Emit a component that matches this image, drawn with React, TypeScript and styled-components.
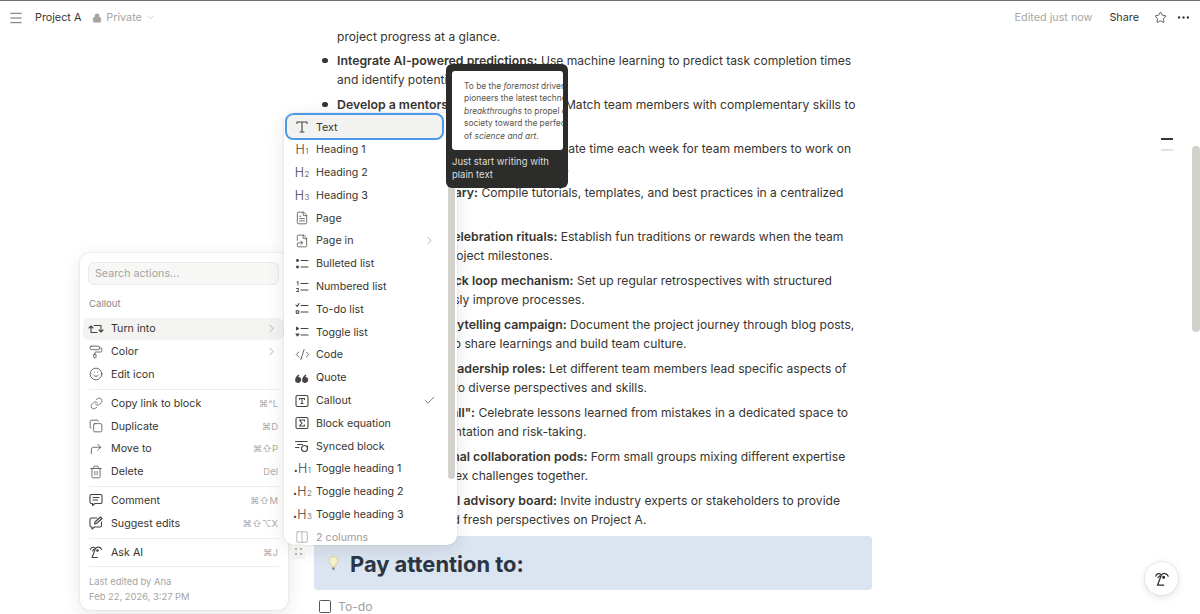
import React from 'react';
import styled, { createGlobalStyle } from 'styled-components';
import {
  Check,
  ChevronDown,
  ChevronRight,
  CodeXml,
  Columns2,
  Copy,
  CornerUpRight,
  FileSymlink,
  FileText,
  Link,
  Lock,
  Menu,
  MoreHorizontal,
  PaintRoller,
  Smile,
  Star,
  Trash2,
} from 'lucide-react';

const GlobalStyle = createGlobalStyle`
  html, body { margin: 0; padding: 0; height: 100%; background: #fff; overflow: hidden; }
  body { font-family: Inter, "Liberation Sans", sans-serif; color: #37352f; }
`;

const Page = styled.div`
  position: relative;
  width: 1200px;
  height: 614px;
  overflow: hidden;
  display: flex;
  flex-direction: column;
  background: #fff;
  border-top: 1px solid #6f6f6f;
  box-sizing: border-box;
`;

const Topbar = styled.header`
  flex: 0 0 30px;
  display: flex;
  align-items: center;
  padding: 3px 9px 0 8px;
  box-sizing: border-box;
  background: #fff;
  position: relative;
  z-index: 1;
  font-size: 10.8px;
`;

const IconBtn = styled.span`
  display: inline-flex;
  color: #37352f;
`;

const Crumb = styled.span`
  margin-left: 11px;
  color: #37352f;
`;

const PrivateTag = styled.span`
  display: flex;
  align-items: center;
  gap: 4px;
  margin-left: 11px;
  color: #a5a4a0;
`;

const Spacer = styled.div`
  flex: 1;
`;

const Edited = styled.span`
  color: #a8a7a3;
  margin-right: 17px;
`;

const ShareLabel = styled.span`
  color: #37352f;
  margin-right: 15px;
`;

const MoreBtn = styled(IconBtn)`
  margin-left: 9px;
`;

const Content = styled.main`
  flex: 1;
  min-height: 0;
  overflow: hidden;
  padding-left: 314px;
`;

const Doc = styled.div`
  width: 558px;
  margin-top: -4px;
`;

const BulletList = styled.ul`
  list-style: none;
  margin: 0;
  padding: 0;
`;

const Bullet = styled.li`
  position: relative;
  padding-left: 23px;
  margin-bottom: 5px;
  font-size: 12.1px;
  line-height: 19.5px;
  color: #37352f;
  &::before {
    content: '';
    position: absolute;
    left: 8px;
    top: 7px;
    width: 5.5px;
    height: 5.5px;
    border-radius: 50%;
    background: #37352f;
  }
  b {
    font-size: 12.3px;
    font-weight: 600;
  }
`;

const FirstLine = styled.div`
  padding-left: 23px;
  margin-bottom: 4px;
  font-size: 12.1px;
  line-height: 19.5px;
`;

const CalloutBox = styled.section`
  display: flex;
  align-items: center;
  gap: 10px;
  height: 54px;
  margin-top: 6px;
  padding: 2px 0 0 13px;
  box-sizing: border-box;
  background: #dbe4f1;
  border-radius: 4px;
`;

const CalloutTitle = styled.h2`
  margin: 0;
  font-size: 21.9px;
  font-weight: 700;
  color: #2b3543;
`;

const TodoRow = styled.div`
  display: flex;
  align-items: center;
  gap: 7px;
  margin-top: 9px;
  padding-left: 5px;
  font-size: 12.2px;
  color: #a3a29e;
`;

const TodoBox = styled.span`
  width: 10px;
  height: 11px;
  border: 1.4px solid #55534e;
  border-radius: 1.5px;
`;

const Outline = styled.div`
  position: absolute;
  top: 137px;
  left: 1161px;
  display: flex;
  flex-direction: column;
  gap: 9px;
`;

const OutlineMark = styled.span<{ $on?: boolean }>`
  width: 12px;
  height: 2px;
  background: ${(p) => (p.$on ? '#37352f' : '#e3e2df')};
`;

const PageScroll = styled.div`
  position: absolute;
  left: 1192px;
  top: 145px;
  width: 8px;
  height: 186px;
  border-radius: 4px;
  background: #d3d1cb;
`;

const Popup = styled.div`
  position: absolute;
  background: #fff;
  border-radius: 10px;
  box-shadow: 0 0 0 1px rgba(55, 53, 47, 0.05), 0 4px 18px rgba(15, 15, 15, 0.1);
  font-size: 10.7px;
  color: #37352f;
`;

const ActionsMenu = styled(Popup)`
  left: 80px;
  top: 252px;
  width: 208px;
  height: 357px;
  padding: 9px 4px 0 3px;
  box-sizing: border-box;
`;

const SearchBox = styled.div`
  height: 23px;
  margin: 0 5px 0 5px;
  padding-left: 6px;
  display: flex;
  align-items: center;
  background: #f7f7f5;
  border: 1px solid #ecebe9;
  border-radius: 6px;
  color: #a5a4a0;
  box-sizing: border-box;
`;

const SectionLabel = styled.div`
  margin: 12px 0 6.5px 6px;
  font-size: 9.6px;
  line-height: 14px;
  color: #8a8985;
`;

const Row = styled.div<{ $hover?: boolean }>`
  display: flex;
  align-items: center;
  height: 22.8px;
  padding: 0 6px 0 5px;
  gap: 7px;
  border-radius: 6px;
  background: ${(p) => (p.$hover ? '#f3f3f1' : 'transparent')};
`;

const RowIcon = styled.span`
  flex: 0 0 16px;
  min-width: 0;
  display: flex;
  justify-content: center;
  align-items: center;
  color: #45443f;
`;

const Shortcut = styled.span`
  margin-left: auto;
  font-size: 9.5px;
  color: #aeada9;
`;

const RowChevron = styled.span`
  margin-left: auto;
  display: flex;
  color: #8d8c88;
`;

const Divider = styled.div`
  height: 1px;
  margin: 3px 5px 2px 6px;
  background: #efeeec;
`;

const Footnote = styled.div`
  margin: 6.5px 0 0 6px;
  font-size: 9.4px;
  line-height: 15.5px;
  color: #a5a4a0;
`;

const BlocksMenu = styled(Popup)`
  left: 284px;
  top: 112px;
  width: 173px;
  height: 432px;
  overflow: hidden;
`;

const BlocksList = styled.div`
  width: 159px;
  padding: 0.4px 0 0 1px;
`;

const BlockRow = styled(Row)<{ $faded?: boolean }>`
  padding: 0 8px 0 9px;
  gap: 6px;
  opacity: ${(p) => (p.$faded ? 0.5 : 1)};
`;

const SelectedRow = styled(BlockRow)`
  height: 27px;
  margin-bottom: -2px;
  background: #f2f2f0;
  border: 2px solid #4d9be8;
  border-radius: 8px;
  padding-left: 7px;
  padding-top: 1px;
  box-sizing: border-box;
`;

const BlockScroll = styled.div`
  position: absolute;
  left: 164px;
  top: 0;
  width: 7px;
  height: 366px;
  border-radius: 4px;
  background: #d3d1cb;
`;

const HeadingGlyph = styled.span`
  font-size: 12.5px;
  font-weight: 300;
  color: #45443f;
  white-space: nowrap;
  small {
    font-size: 8px;
    margin-left: 0.5px;
  }
`;

const Tooltip = styled.div`
  position: absolute;
  left: 446px;
  top: 63px;
  width: 122px;
  height: 124px;
  padding: 7px 5px 0 6px;
  box-sizing: border-box;
  background: #2c2c2b;
  border-radius: 6px;
  color: #dededc;
  font-size: 9.5px;
  line-height: 13px;
`;

const Preview = styled.div`
  height: 79px;
  box-sizing: border-box;
  padding: 9px 0 0 12px;
  margin-bottom: 5px;
  background: #fff;
  border-radius: 3px;
  overflow: hidden;
  color: #56554f;
  font-size: 8.4px;
  line-height: 12.4px;
  white-space: nowrap;
`;

const DragHandle = styled.div`
  position: absolute;
  left: 292px;
  top: 543px;
  width: 13px;
  height: 15px;
  display: grid;
  grid-template-columns: 2px 2px;
  gap: 3px 3px;
  justify-content: center;
  align-content: center;
  background: #f0f0ee;
  border-radius: 2px;
  i {
    width: 2px;
    height: 2px;
    background: #9d9c98;
    border-radius: 50%;
  }
`;

const HelpBtn = styled.div`
  position: absolute;
  left: 1145px;
  top: 561px;
  width: 33px;
  height: 33px;
  display: flex;
  align-items: center;
  justify-content: center;
  border-radius: 50%;
  background: #fff;
  box-shadow: 0 0 0 1px rgba(15, 15, 15, 0.05), 0 2px 8px rgba(15, 15, 15, 0.12);
  color: #2b2a27;
`;

const Svg: React.FC<{ size?: number; children: React.ReactNode }> = ({ size = 16, children }) => (
  <svg width={size} height={size} viewBox="0 0 16 16" fill="none" stroke="currentColor" strokeWidth="1.1" strokeLinecap="round" strokeLinejoin="round">
    {children}
  </svg>
);

const AiFace = ({ size = 16 }: { size?: number }) => (
  <Svg size={size}>
    <path d="M2.5 5.5C3 3 6 2.5 7.5 4.5C9 2.5 12.5 2.5 13.5 5.5M7.5 4.5L4 13.5H9.5M4.5 6.8L6 5.2" />
    <circle cx="9.5" cy="6.5" r="0.8" fill="currentColor" />
  </Svg>
);

const TurnIcon = () => (
  <Svg>
    <path d="M1 7L3 5L5 7M3 5V11.5H9M15 9L13 11L11 9M13 11V4.5H6" />
  </Svg>
);

const CommentIcon = () => (
  <Svg>
    <path d="M3.5 2.5H12.5A1.5 1.5 0 0 1 14 4V10A1.5 1.5 0 0 1 12.5 11.5H7L4.5 13.5V11.5H3.5A1.5 1.5 0 0 1 2 10V4A1.5 1.5 0 0 1 3.5 2.5ZM5 5.5H11M5 8H9.5" />
  </Svg>
);

const SuggestIcon = () => (
  <Svg>
    <path d="M9 3H3.5A1.5 1.5 0 0 0 2 4.5V10.5A1.5 1.5 0 0 0 3.5 12H4V14L6.5 12H12A1.5 1.5 0 0 0 13.5 10.5V7M6.5 9L7 7L12.5 2L14 3.5L8.5 8.5Z" />
  </Svg>
);

const TextIcon = () => (
  <Svg>
    <path d="M3 4.5V3H13V4.5M8 3V13M6 13H10" />
  </Svg>
);

const LinesIcon = ({ kind }: { kind: 'dots' | 'nums' | 'todo' | 'toggle' }) => (
  <Svg>
    <path d="M7 4.5H14M7 11H14" />
    {kind === 'dots' && (
      <>
        <circle cx="3.5" cy="4.5" r="0.9" fill="currentColor" />
        <circle cx="3.5" cy="11" r="0.9" fill="currentColor" />
      </>
    )}
    {kind === 'nums' && <path d="M3 3L4 2.5V6M2.5 9.5H4.5V11L2.5 12.5H4.8" strokeWidth="0.9" />}
    {kind === 'todo' && (
      <>
        <path d="M2 4L3.2 5.5L5 2.5" />
        <rect x="2.2" y="9.8" width="2.6" height="2.6" rx="0.8" />
      </>
    )}
    {kind === 'toggle' && (
      <>
        <path d="M2.5 3.2L4.5 4.5L2.5 5.8Z" fill="currentColor" />
        <path d="M2 10L5 10L3.5 12Z" fill="currentColor" />
      </>
    )}
  </Svg>
);

const QuoteIcon = () => (
  <Svg>
    <path
      d="M4.5 4.5C3 5.5 1.2 7.5 1.2 9.5A3 3 0 1 0 4.4 7C4.6 6.3 5 5.7 5.4 5.3ZM11.5 4.5C10 5.5 8.2 7.5 8.2 9.5A3 3 0 1 0 11.4 7C11.6 6.3 12 5.7 12.4 5.3Z"
      fill="currentColor"
      stroke="none"
    />
  </Svg>
);

const BoxedIcon = ({ inner }: { inner: string }) => (
  <Svg>
    <rect x="2" y="2.5" width="12" height="11" rx="1.5" />
    <path d={inner} />
  </Svg>
);

const SyncIcon = () => (
  <Svg>
    <path d="M1.5 3.5H13M3.5 6.5H8.5M1.5 9.5H5" />
    <circle cx="10.5" cy="10.5" r="3" />
    <path d="M13.5 8L13.5 10.5" />
  </Svg>
);

const Bulb = () => (
  <svg width="13" height="17" viewBox="0 0 13 17" fill="none">
    <path d="M6.5 1.5A4.3 4.3 0 0 0 4.5 9.6L5 11.5H8L8.5 9.6A4.3 4.3 0 0 0 6.5 1.5Z" fill="#f8f1cf" stroke="#e6d48c" strokeWidth="1.1" />
    <path d="M5 12.5H8V13.8L6.5 15.5L5 13.8Z" fill="#8f8f8c" />
  </svg>
);

const H = ({ n, dot }: { n: number; dot?: boolean }) => (
  <HeadingGlyph>
    {dot ? <small>•</small> : ''}H<small>{n}</small>
  </HeadingGlyph>
);

const ActionRow = ({ icon, label, keys, more, hover }: { icon: React.ReactNode; label: string; keys?: string; more?: boolean; hover?: boolean }) => (
  <Row $hover={hover}>
    <RowIcon>{icon}</RowIcon>
    {label}
    {keys && <Shortcut>{keys}</Shortcut>}
    {more && (
      <RowChevron>
        <ChevronRight size={13} strokeWidth={1.2} />
      </RowChevron>
    )}
  </Row>
);

const BlockItem = ({ icon, label, end, faded }: { icon: React.ReactNode; label: string; end?: React.ReactNode; faded?: boolean }) => (
  <BlockRow $faded={faded}>
    <RowIcon>{icon}</RowIcon>
    {label}
    {end && <RowChevron>{end}</RowChevron>}
  </BlockRow>
);

const bullets: [string, string, string?][] = [
  ['Integrate AI-powered predictions:', ' Use machine learning to predict task completion times', 'and identify potential delays early.'],
  ['Develop a mentorship buddy scheme:', ' Match team members with complementary skills to', 'accelerate growth.'],
  ['Schedule weekly innovation time:', ' Allocate time each week for team members to work on', 'developing creative ideas with Project A.'],
  ['Build a resource library:', ' Compile tutorials, templates, and best practices in a centralized', 'location.'],
  ['Define team-wide celebration rituals:', ' Establish fun traditions or rewards when the team', 'reaches important project milestones.'],
  ['Implement a feedback loop mechanism:', ' Set up regular retrospectives with structured', 'actions to continuously improve processes.'],
  ['Launch a global storytelling campaign:', ' Document the project journey through blog posts,', 'videos, or meetups to share learnings and build team culture.'],
  ['Introduce rotating leadership roles:', ' Let different team members lead specific aspects of', 'every project phase to diverse perspectives and skills.'],
  ['Create a "Failure Wall":', ' Celebrate lessons learned from mistakes in a dedicated space to', 'encourage experimentation and risk-taking.'],
  ['Bring cross-functional collaboration pods:', ' Form small groups mixing different expertise', 'so they tackle complex challenges together.'],
  ['Establish an external advisory board:', ' Invite industry experts or stakeholders to provide', 'outside guidance and fresh perspectives on Project A.'],
];

export default function App() {
  return (
    <>
      <GlobalStyle />
      <Page>
        <Topbar>
          <IconBtn>
            <Menu size={16} strokeWidth={1.1} />
          </IconBtn>
          <Crumb>Project A</Crumb>
          <PrivateTag>
            <Lock size={10} fill="#a5a4a0" strokeWidth={1.4} />
            Private
            <ChevronDown size={9} strokeWidth={1.4} />
          </PrivateTag>
          <Spacer />
          <Edited>Edited just now</Edited>
          <ShareLabel>Share</ShareLabel>
          <IconBtn>
            <Star size={13} strokeWidth={1.4} />
          </IconBtn>
          <MoreBtn>
            <MoreHorizontal size={15} strokeWidth={1.8} />
          </MoreBtn>
        </Topbar>

        <Content>
          <Doc>
            <FirstLine>project progress at a glance.</FirstLine>
            <BulletList>
              {bullets.map(([head, rest, second]) => (
                <Bullet key={head}>
                  <b>{head}</b>
                  {rest}
                  <br />
                  {second}
                </Bullet>
              ))}
            </BulletList>
            <CalloutBox>
              <Bulb />
              <CalloutTitle>Pay attention to:</CalloutTitle>
            </CalloutBox>
            <TodoRow>
              <TodoBox />
              To-do
            </TodoRow>
          </Doc>
        </Content>

        <Outline>
          <OutlineMark $on />
          <OutlineMark />
        </Outline>
        <PageScroll />

        <ActionsMenu>
          <SearchBox>Search actions...</SearchBox>
          <SectionLabel>Callout</SectionLabel>
          <ActionRow hover icon={<TurnIcon />} label="Turn into" more />
          <ActionRow icon={<PaintRoller size={14} strokeWidth={1.3} />} label="Color" more />
          <ActionRow icon={<Smile size={14} strokeWidth={1.3} />} label="Edit icon" />
          <Divider />
          <ActionRow icon={<Link size={13} strokeWidth={1.3} />} label="Copy link to block" keys="⌘^L" />
          <ActionRow icon={<Copy size={14} strokeWidth={1.3} />} label="Duplicate" keys="⌘D" />
          <ActionRow icon={<CornerUpRight size={14} strokeWidth={1.3} />} label="Move to" keys="⌘⇧P" />
          <ActionRow icon={<Trash2 size={14} strokeWidth={1.3} />} label="Delete" keys="Del" />
          <Divider />
          <ActionRow icon={<CommentIcon />} label="Comment" keys="⌘⇧M" />
          <ActionRow icon={<SuggestIcon />} label="Suggest edits" keys="⌘⇧⌥X" />
          <Divider />
          <ActionRow icon={<AiFace />} label="Ask AI" keys="⌘J" />
          <Divider />
          <Footnote>
            Last edited by Ana
            <br />
            Feb 22, 2026, 3:27 PM
          </Footnote>
        </ActionsMenu>

        <BlocksMenu>
          <BlocksList>
            <SelectedRow>
              <RowIcon>
                <TextIcon />
              </RowIcon>
              Text
            </SelectedRow>
            <BlockItem icon={<H n={1} />} label="Heading 1" />
            <BlockItem icon={<H n={2} />} label="Heading 2" />
            <BlockItem icon={<H n={3} />} label="Heading 3" />
            <BlockItem icon={<FileText size={14} strokeWidth={1.3} />} label="Page" />
            <BlockItem icon={<FileSymlink size={14} strokeWidth={1.3} />} label="Page in" end={<ChevronRight size={13} strokeWidth={1.2} />} />
            <BlockItem icon={<LinesIcon kind="dots" />} label="Bulleted list" />
            <BlockItem icon={<LinesIcon kind="nums" />} label="Numbered list" />
            <BlockItem icon={<LinesIcon kind="todo" />} label="To-do list" />
            <BlockItem icon={<LinesIcon kind="toggle" />} label="Toggle list" />
            <BlockItem icon={<CodeXml size={15} strokeWidth={1.3} />} label="Code" />
            <BlockItem icon={<QuoteIcon />} label="Quote" />
            <BlockItem icon={<BoxedIcon inner="M5.5 6.5V5.5H10.5V6.5M8 5.5V10.5M7 10.5H9" />} label="Callout" end={<Check size={13} strokeWidth={1.3} color="#45443f" />} />
            <BlockItem icon={<BoxedIcon inner="M10.5 6V5H5.5L8 8L5.5 11H10.5V10" />} label="Block equation" />
            <BlockItem icon={<SyncIcon />} label="Synced block" />
            <BlockItem icon={<H n={1} dot />} label="Toggle heading 1" />
            <BlockItem icon={<H n={2} dot />} label="Toggle heading 2" />
            <BlockItem icon={<H n={3} dot />} label="Toggle heading 3" />
            <BlockItem faded icon={<Columns2 size={14} strokeWidth={1.3} />} label="2 columns" />
          </BlocksList>
          <BlockScroll />
        </BlocksMenu>

        <Tooltip>
          <Preview>
            To be the <em>foremost</em> driver
            <br />
            pioneers the latest techno
            <br />
            <em>breakthroughs</em> to propel o
            <br />
            society toward the perfec
            <br />
            of <em>science and art</em>.
          </Preview>
          Just start writing with
          <br />
          plain text
        </Tooltip>

        <DragHandle>
          <i />
          <i />
          <i />
          <i />
        </DragHandle>

        <HelpBtn>
          <AiFace size={18} />
        </HelpBtn>
      </Page>
    </>
  );
}
